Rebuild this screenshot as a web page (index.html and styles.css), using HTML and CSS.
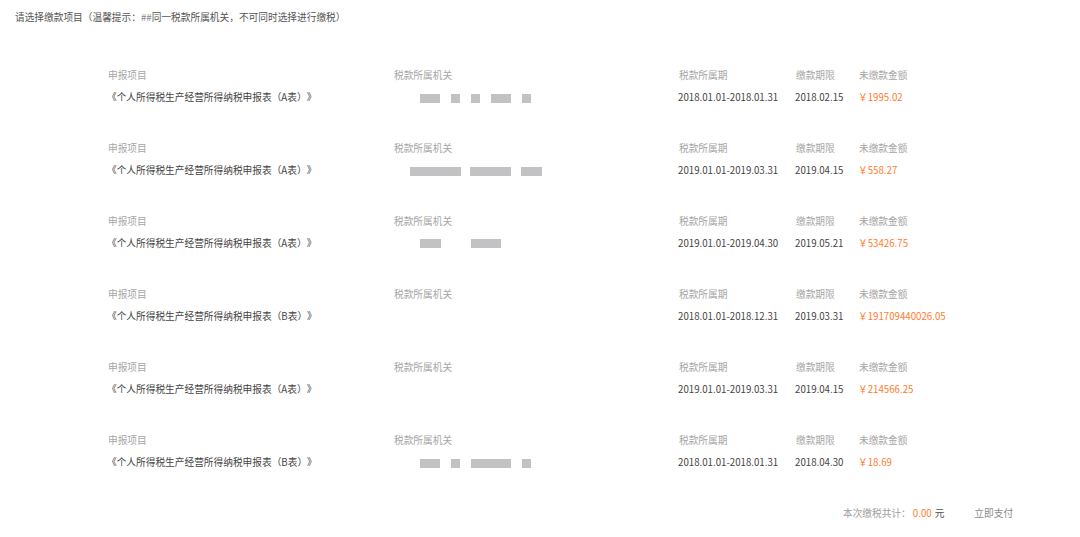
FILE: index.html
```html
<!DOCTYPE html>
<html lang="zh-CN">
<head>
<meta charset="utf-8">
<title>请选择缴款项目</title>
<link rel="stylesheet" href="styles.css">
</head>
<body>
<div class="page">
  <div class="hint">请选择缴款项目（温馨提示：<span class="mark">##</span>同一税款所属机关，不可同时选择进行缴税）</div>

  <div class="list">
    <div class="row">
      <div class="lbl">申报项目</div><div class="lbl">税款所属机关</div><div class="lbl">税款所属期</div><div class="lbl">缴款期限</div><div class="lbl">未缴款金额</div>
      <div class="val">《个人所得税生产经营所得纳税申报表（A表）》</div>
      <div class="val redact off27"><i class="w20"></i><i class="w9 g11"></i><i class="w9 g11"></i><i class="w20 g11"></i><i class="w9 g11"></i></div>
      <div class="val">2018.01.01-2018.01.31</div><div class="val">2018.02.15</div><div class="val amt">￥1995.02</div>
    </div>

    <div class="row">
      <div class="lbl">申报项目</div><div class="lbl">税款所属机关</div><div class="lbl">税款所属期</div><div class="lbl">缴款期限</div><div class="lbl">未缴款金额</div>
      <div class="val">《个人所得税生产经营所得纳税申报表（A表）》</div>
      <div class="val redact off17"><i class="w51"></i><i class="w41 g9"></i><i class="w21 g10"></i></div>
      <div class="val">2019.01.01-2019.03.31</div><div class="val">2019.04.15</div><div class="val amt">￥558.27</div>
    </div>

    <div class="row">
      <div class="lbl">申报项目</div><div class="lbl">税款所属机关</div><div class="lbl">税款所属期</div><div class="lbl">缴款期限</div><div class="lbl">未缴款金额</div>
      <div class="val">《个人所得税生产经营所得纳税申报表（A表）》</div>
      <div class="val redact off27 up"><i class="w21"></i><i class="w30 g30"></i></div>
      <div class="val">2019.01.01-2019.04.30</div><div class="val">2019.05.21</div><div class="val amt">￥53426.75</div>
    </div>

    <div class="row">
      <div class="lbl">申报项目</div><div class="lbl">税款所属机关</div><div class="lbl">税款所属期</div><div class="lbl">缴款期限</div><div class="lbl">未缴款金额</div>
      <div class="val">《个人所得税生产经营所得纳税申报表（B表）》</div>
      <div class="val"></div>
      <div class="val">2018.01.01-2018.12.31</div><div class="val">2019.03.31</div><div class="val amt">￥191709440026.05</div>
    </div>

    <div class="row">
      <div class="lbl">申报项目</div><div class="lbl">税款所属机关</div><div class="lbl">税款所属期</div><div class="lbl">缴款期限</div><div class="lbl">未缴款金额</div>
      <div class="val">《个人所得税生产经营所得纳税申报表（A表）》</div>
      <div class="val"></div>
      <div class="val">2019.01.01-2019.03.31</div><div class="val">2019.04.15</div><div class="val amt">￥214566.25</div>
    </div>

    <div class="row">
      <div class="lbl">申报项目</div><div class="lbl">税款所属机关</div><div class="lbl">税款所属期</div><div class="lbl">缴款期限</div><div class="lbl">未缴款金额</div>
      <div class="val">《个人所得税生产经营所得纳税申报表（B表）》</div>
      <div class="val redact off27"><i class="w20"></i><i class="w9 g11"></i><i class="w40 g11"></i><i class="w9 g11"></i></div>
      <div class="val">2018.01.01-2018.01.31</div><div class="val">2018.04.30</div><div class="val amt">￥18.69</div>
    </div>
  </div>

  <div class="footer">
    <span class="total-label">本次缴税共计：</span><span class="total-num">0.00</span><span class="unit">元</span>
    <span class="pay">立即支付</span>
  </div>
</div>
</body>
</html>
```

FILE: styles.css
```css
html, body {
  margin: 0;
  padding: 0;
  background: #ffffff;
}

body {
  font-family: "Noto Sans CJK SC", "Noto Sans", sans-serif;
  font-size: 9.7px;
  color: #444444;
  text-spacing-trim: space-all;
}

.page {
  width: 1080px;
  height: 537px;
  overflow: hidden;
}

.hint {
  padding: 6px 0 0 15px;
  line-height: 22px;
  color: #555555;
}

.mark {
  color: #888888;
}

.list {
  margin-top: 36px;
  padding-left: 107px;
}

.row {
  display: grid;
  grid-template-columns: 286px 285px 117px 63px 1fr;
  grid-template-rows: 22px 22px;
  margin-bottom: 29px;
}

.lbl {
  line-height: 22px;
  color: #a6a6a6;
  padding-left: 1px;
}

.val {
  line-height: 22px;
  color: #444444;
  white-space: nowrap;
}

.amt {
  color: #ff7c2e;
}

.redact {
  display: flex;
  align-items: center;
  padding-top: 2px;
}

.redact.up {
  padding-top: 0;
}

.redact i {
  display: block;
  height: 9px;
  background: #c2c2c4;
}

.off27 { padding-left: 27px; }
.off17 { padding-left: 17px; }

.w9 { width: 9px; }
.w20 { width: 20px; }
.w21 { width: 21px; }
.w30 { width: 30px; }
.w40 { width: 40px; }
.w41 { width: 41px; }
.w51 { width: 51px; }

.g9 { margin-left: 9px; }
.g10 { margin-left: 10px; }
.g11 { margin-left: 11px; }
.g30 { margin-left: 30px; }

.footer {
  display: flex;
  align-items: center;
  margin-top: 9px;
  padding-left: 843px;
  line-height: 22px;
}

.total-label {
  color: #a0a0a0;
}

.total-num {
  color: #ff7c2e;
  margin-left: 2px;
}

.unit {
  color: #555555;
  margin-left: 3px;
}

.pay {
  color: #8a8a8a;
  margin-left: 30px;
}
```
